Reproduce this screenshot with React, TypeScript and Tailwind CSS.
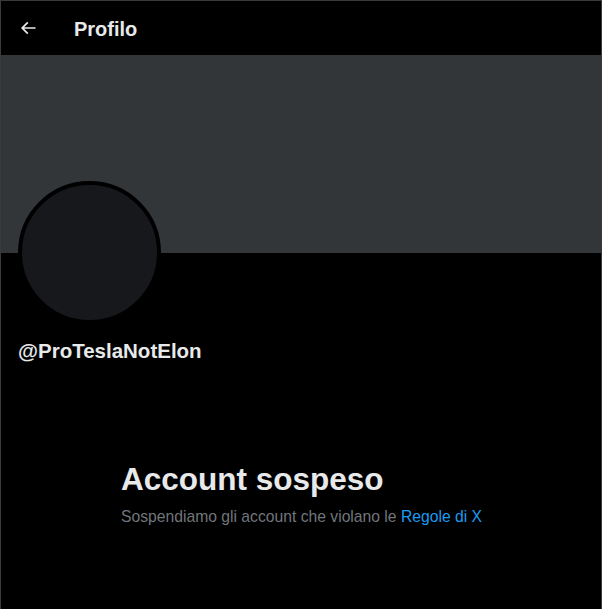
import React from "react";

const font = { fontFamily: '"Liberation Sans", Arial, sans-serif' };

function BackArrow() {
  return (
    <svg viewBox="0 0 24 24" className="w-5 h-5 fill-[#e7e9ea]">
      <path d="M7.414 13l5.043 5.04-1.414 1.42L3.586 12l7.457-7.46 1.414 1.42L7.414 11H21v2H7.414z" />
    </svg>
  );
}

export default function App() {
  return (
    <div
      className="w-[602px] h-[609px] bg-black border-l border-t border-r border-[#3a3a3a] flex flex-col overflow-hidden"
      style={font}
    >
      {/* header */}
      <div className="h-[54px] flex items-center px-4 shrink-0">
        <div className="w-[57px] flex items-center pl-[1px]">
          <BackArrow />
        </div>
        <h1 className="text-[20px] leading-6 font-bold text-[#e7e9ea] mt-[1px]">Profilo</h1>
      </div>

      {/* banner */}
      <div className="h-[198px] bg-[#333639] shrink-0" />

      {/* profile */}
      <div className="px-[17px]">
        <div className="-mt-[72px] w-[143px] h-[143px] rounded-full border-4 border-black bg-[#16181c]" />
        <div className="mt-[15px] text-[20.5px] leading-6 font-bold text-[#e7e9ea]">
          @ProTeslaNotElon
        </div>
      </div>

      {/* empty state */}
      <div className="w-[400px] mx-auto px-5 mt-[98px]">
        <h2 className="text-[31.5px] leading-9 font-bold text-[#e7e9ea] mb-[10px]">Account sospeso</h2>
        <p className="text-[15.7px] leading-5 text-[#71767b] whitespace-nowrap">
          Sospendiamo gli account che violano le{" "}
          <span className="text-[#1d9bf0]">Regole di X</span>
        </p>
      </div>
    </div>
  );
}
